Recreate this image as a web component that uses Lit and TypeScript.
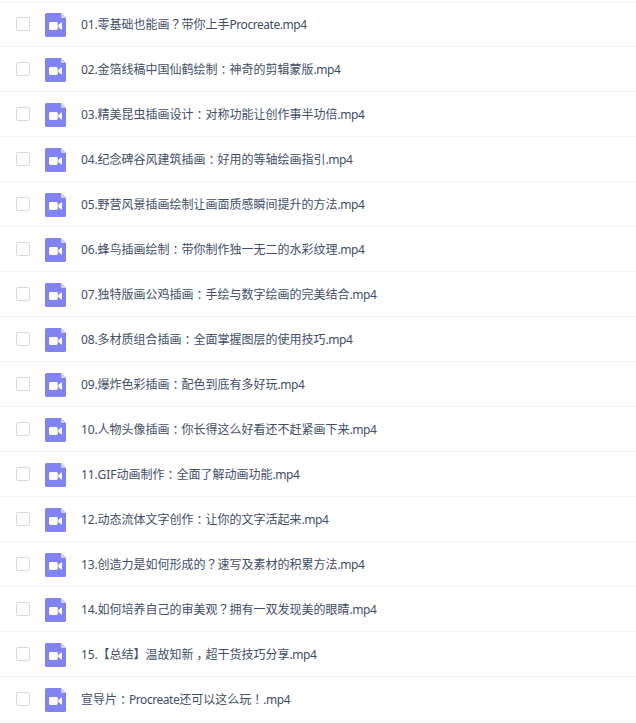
import { LitElement, html, css } from 'lit';
import { customElement, property } from 'lit/decorators.js';

const FILES = [
  '01.零基础也能画？带你上手Procreate.mp4',
  '02.金箔线稿中国仙鹤绘制：神奇的剪辑蒙版.mp4',
  '03.精美昆虫插画设计：对称功能让创作事半功倍.mp4',
  '04.纪念碑谷风建筑插画：好用的等轴绘画指引.mp4',
  '05.野营风景插画绘制让画面质感瞬间提升的方法.mp4',
  '06.蜂鸟插画绘制：带你制作独一无二的水彩纹理.mp4',
  '07.独特版画公鸡插画：手绘与数字绘画的完美结合.mp4',
  '08.多材质组合插画：全面掌握图层的使用技巧.mp4',
  '09.爆炸色彩插画：配色到底有多好玩.mp4',
  '10.人物头像插画：你长得这么好看还不赶紧画下来.mp4',
  '11.GIF动画制作：全面了解动画功能.mp4',
  '12.动态流体文字创作：让你的文字活起来.mp4',
  '13.创造力是如何形成的？速写及素材的积累方法.mp4',
  '14.如何培养自己的审美观？拥有一双发现美的眼睛.mp4',
  '15.【总结】温故知新，超干货技巧分享.mp4',
  '宣导片：Procreate还可以这么玩！.mp4',
];

@customElement('video-icon')
export class VideoIcon extends LitElement {
  static styles = css`
    :host {
      display: block;
      width: 21px;
      height: 24px;
    }
    svg {
      display: block;
    }
  `;

  render() {
    return html`
      <svg width="21" height="24" viewBox="0 0 21 24" aria-hidden="true">
        <path d="M1.5 0H16l5 5v17.5a1.5 1.5 0 0 1-1.5 1.5h-18A1.5 1.5 0 0 1 0 22.5v-21A1.5 1.5 0 0 1 1.5 0z" fill="#8183f1" />
        <path d="M16 0l5 5h-4a1 1 0 0 1-1-1z" fill="#cdcdfa" />
        <rect x="4" y="9" width="8.7" height="8" rx="1.4" fill="#fff" />
        <path d="M13.3 12.1l2.7-2.4c.5-.4 1-.2 1 .4v5.8c0 .6-.5.8-1 .4l-2.7-2.4z" fill="#fff" />
      </svg>
    `;
  }
}

@customElement('file-row')
export class FileRow extends LitElement {
  @property({ type: String }) name = '';

  static styles = css`
    :host {
      display: flex;
      align-items: flex-end;
      box-sizing: border-box;
      height: 45px;
      padding-left: 16px;
      border-bottom: 1px solid #f1f5fc;
    }
    input {
      appearance: none;
      box-sizing: border-box;
      width: 14px;
      height: 14px;
      margin: 0 15px 15px 0;
      border: 1px solid #d4d9e4;
      border-radius: 2px;
      background-color: #fff;
    }
    video-icon {
      margin: 0 15px 9px 0;
    }
    .name {
      height: 18px;
      margin-bottom: 12px;
      color: #424e67;
      font-size: 12px;
      line-height: 18px;
      white-space: nowrap;
    }
    .number {
      letter-spacing: -0.15px;
    }
    .latin {
      letter-spacing: -0.45px;
    }
    /* The TC face centres full-width punctuation in its cell */
    .mark {
      font-family: 'Noto Sans CJK TC', sans-serif;
      line-height: 0;
    }
    /* Colons and commas stay on the baseline: half-width glyph, padded back to a full cell */
    .low {
      padding: 0 3px;
      font-feature-settings: 'halt';
    }
  `;

  private _renderPart(part: string) {
    if (/^[：，]$/.test(part)) return html`<span class="low">${part}</span>`;
    if (/^[？！]$/.test(part)) return html`<span class="mark" lang="zh-TW">${part}</span>`;
    if (/^\d+\.$/.test(part)) return html`<span class="number">${part}</span>`;
    if (/^(Procreate|\.mp4)$/.test(part)) return html`<span class="latin">${part}</span>`;
    return part;
  }

  render() {
    const parts = this.name.split(/([：？！，]|^\d+\.|Procreate|\.mp4)/).filter((part) => part);
    return html`
      <input type="checkbox" aria-label=${this.name} />
      <video-icon></video-icon>
      <span class="name">${parts.map((part) => this._renderPart(part))}</span>
    `;
  }
}

@customElement('app-root')
export class AppRoot extends LitElement {
  static styles = css`
    :host {
      display: block;
      box-sizing: border-box;
      height: 723px;
      padding-top: 2px;
      overflow: hidden;
      background-color: #fff;
      font-family: 'Noto Sans', 'Noto Sans CJK SC', sans-serif;
    }
    .list {
      border-top: 1px solid #f1f5fc;
    }
    file-row:first-child {
      height: 44px;
    }
  `;

  render() {
    return html`
      <div class="list" lang="zh-CN">${FILES.map((name) => html`<file-row .name=${name}></file-row>`)}</div>
    `;
  }
}
